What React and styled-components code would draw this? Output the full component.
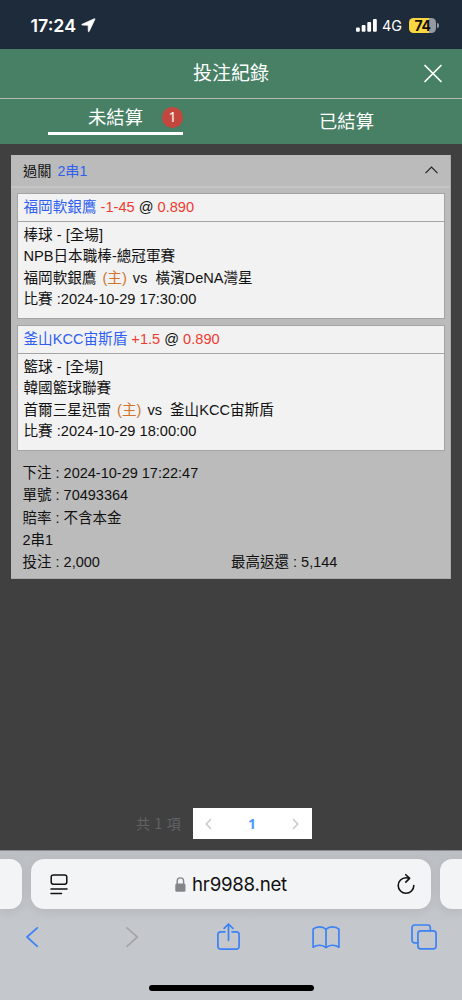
import React, { useState } from 'react'
import styled, { createGlobalStyle } from 'styled-components'

const legs = [
    {
        pick: '福岡軟銀鷹',
        line: '-1-45',
        odds: '0.890',
        sport: '棒球 - [全場]',
        league: 'NPB日本職棒-總冠軍賽',
        home: '福岡軟銀鷹',
        away: '橫濱DeNA灣星',
        time: '2024-10-29 17:30:00',
    },
    {
        pick: '釜山KCC宙斯盾',
        line: '+1.5',
        odds: '0.890',
        sport: '籃球 - [全場]',
        league: '韓國籃球聯賽',
        home: '首爾三星迅雷',
        away: '釜山KCC宙斯盾',
        time: '2024-10-29 18:00:00',
    },
]

const GlobalStyle = createGlobalStyle`
    * {
        box-sizing: border-box;
    }
    body {
        margin: 0;
        background: #404040;
        font-family: "Liberation Sans", "Noto Sans CJK TC", sans-serif;
    }
    button {
        padding: 0;
        border: 0;
        background: none;
        font: inherit;
        color: inherit;
    }
    svg {
        display: block;
        overflow: visible;
        flex: none;
    }
`

// Status bar
function StatusBar() {
    return (
        <Status>
            <Clock>
                17:24
                <svg width="15" height="15" viewBox="0 0 15 15">
                    <path d="M13.4 .7 1 6.3Q.2 6.9 1.2 7.1L7.1 7.3 7.3 13.3Q7.5 14.3 8.1 13.5L13.9 1.3Q14.1 .4 13.4 .7Z" fill="#fff" stroke="#fff" strokeWidth=".7" strokeLinejoin="round" />
                </svg>
            </Clock>
            <Signal>
                <svg width="21" height="13" viewBox="0 0 21 13" fill="#fff">
                    <rect x="0" y="8.4" width="3.8" height="4.4" rx="1" />
                    <rect x="5.7" y="6" width="3.8" height="6.8" rx="1" />
                    <rect x="11.3" y="3" width="3.8" height="9.8" rx="1" />
                    <rect x="17" y="0" width="3.8" height="12.8" rx="1" />
                </svg>
                <Network>4G</Network>
                <Battery>74</Battery>
            </Signal>
        </Status>
    )
}

function Leg({ leg }) {
    return (
        <LegBox>
            <LegHead>
                <Blue>{leg.pick}</Blue> <Red>{leg.line}</Red> @ <Red>{leg.odds}</Red>
            </LegHead>
            <LegBody>
                <div>{leg.sport}</div>
                <div>{leg.league}</div>
                <Match>
                    <span>{leg.home}</span>
                    <Orange>(主)</Orange>
                    <span>vs</span>
                    <Away>{leg.away}</Away>
                </Match>
                <div>比賽 :{leg.time}</div>
            </LegBody>
        </LegBox>
    )
}

// Safari bottom bars
function Browser() {
    return (
        <BrowserBar>
            <Tabs>
                <SideTab $left />
                <Address>
                    <svg width="18" height="21" viewBox="0 0 18 21" fill="none" stroke="#111" strokeWidth="1.5" strokeLinecap="round">
                        <rect x="1.2" y=".9" width="15.6" height="9.3" rx="2.2" />
                        <path d="M1 14.9h16M1 19.5h10.5" />
                    </svg>
                    <Host>
                        <svg width="11" height="15" viewBox="0 0 11 15">
                            <path d="M2.2 7V4.3a3.2 3.4 0 0 1 6.4 0V7" fill="none" stroke="#858589" strokeWidth="1.4" />
                            <rect x=".3" y="6.5" width="10.2" height="8.2" rx="1.5" fill="#858589" />
                        </svg>
                        hr9988.net
                    </Host>
                    <svg width="18" height="20" viewBox="0 0 18 20" fill="none" stroke="#111" strokeWidth="1.6" strokeLinecap="round" strokeLinejoin="round">
                        <path d="M12.2 4.2Q10.8 3.7 9 3.7A7.8 7.8 0 1 0 16.8 11.5" />
                        <path d="M8.8 .7 12.6 4.4 8.8 8.1" />
                    </svg>
                </Address>
                <SideTab />
            </Tabs>
            <Tools>
                <Tool>
                    <svg width="12" height="20" viewBox="0 0 12 20">
                        <path d="M11.3 .8 1 10 11.3 19.3" />
                    </svg>
                </Tool>
                <Tool $muted>
                    <svg width="12" height="20" viewBox="0 0 12 20">
                        <path d="M3 .8 13.3 10 3 19.3" />
                    </svg>
                </Tool>
                <Tool>
                    <svg width="24" height="28" viewBox="0 0 24 28">
                        <path d="M8.9 8.8H4.7A2.8 2.8 0 0 0 1.9 11.6V23.4A2.8 2.8 0 0 0 4.7 26.2H20.3A2.8 2.8 0 0 0 23.1 23.4V11.6A2.8 2.8 0 0 0 20.3 8.8H16.1" />
                        <path d="M12.5 17.3V1.2M8.1 5.3 12.5 1 16.9 5.3" />
                    </svg>
                </Tool>
                <Tool>
                    <svg width="28" height="24" viewBox="0 0 28 24">
                        <path d="M14 4.3V22.6C10.5 19.6 5 19.5 1.1 22.2V4.2C4.6 1 11 1.2 14 4.3C17 1.2 23.4 1 26.9 4.2V22.2C23 19.5 17.5 19.6 14 22.6" />
                    </svg>
                </Tool>
                <Tool>
                    <svg width="26" height="26" viewBox="0 0 26 26">
                        <path d="M6.8 18.9H3.6A2.6 2.6 0 0 1 1 16.3V3.6A2.6 2.6 0 0 1 3.6 1H16.7A2.6 2.6 0 0 1 19.3 3.6V6.9" />
                        <rect x="6.9" y="6.9" width="18.2" height="17.9" rx="2.8" />
                    </svg>
                </Tool>
            </Tools>
            <HomeBar />
        </BrowserBar>
    )
}

export default function App() {
    const [open, setOpen] = useState(true)
    const [tab, setTab] = useState('open')

    return (
        <Page>
            <GlobalStyle />
            <StatusBar />
            <Header>
                <Title>投注紀錄</Title>
                <Close aria-label="close">
                    <svg width="18" height="18" viewBox="0 0 18 18" fill="none" stroke="#fff" strokeWidth="1.7" strokeLinecap="round">
                        <path d="M1 .5 17 16.5M17 .5 1 16.5" />
                    </svg>
                </Close>
            </Header>
            <Nav>
                <NavItem onClick={() => setTab('open')}>
                    <Underline $active={tab === 'open'}>
                        <span>未結算</span>
                        <Badge>1</Badge>
                    </Underline>
                </NavItem>
                <NavItem onClick={() => setTab('settled')}>
                    <Underline $active={tab === 'settled'} $plain>已結算</Underline>
                </NavItem>
            </Nav>
            <Main>
                <Card>
                    <CardHead onClick={() => setOpen(!open)}>
                        <span>過關</span>
                        <Blue>2串1</Blue>
                        <svg width="13" height="8" viewBox="0 0 13 8" fill="none" stroke="#222" strokeWidth="1.2">
                            <path d="M.5 7.2 6.5 1 12.5 7.2" />
                        </svg>
                    </CardHead>
                    {open && (
                        <Legs>
                            {legs.map((leg) => <Leg key={leg.pick} leg={leg} />)}
                        </Legs>
                    )}
                    <Summary>
                        <div>下注 : 2024-10-29 17:22:47</div>
                        <div>單號 : 70493364</div>
                        <div>賠率 : 不含本金</div>
                        <div>2串1</div>
                        <Totals>
                            <span>投注 : 2,000</span>
                            <span>最高返還 : 5,144</span>
                        </Totals>
                    </Summary>
                </Card>
                <Pagination>
                    <Total>共 1 項</Total>
                    <Pager>
                        <svg width="7" height="12" viewBox="0 0 7 12"><path d="M6 1 1.2 6 6 11" /></svg>
                        <Current>1</Current>
                        <svg width="7" height="12" viewBox="0 0 7 12"><path d="M1 1 5.8 6 1 11" /></svg>
                    </Pager>
                </Pagination>
            </Main>
            <Browser />
        </Page>
    )
}

const Page = styled.div`
    width: 462px;
    height: 1000px;
    display: flex;
    flex-direction: column;
    overflow: hidden;
    background: #404040;
`
const Status = styled.div`
    height: 49px;
    padding: 2px 26px 0 30.5px;
    display: flex;
    align-items: center;
    justify-content: space-between;
    background: #1e2b3a;
    color: #fff;
    font-family: Inter, sans-serif;
`
const Clock = styled.div`
    display: flex;
    align-items: center;
    gap: 5px;
    font-size: 17.8px;
    font-weight: 600;
    letter-spacing: 0;
`
const Signal = styled.div`
    display: flex;
    align-items: center;
`
const Network = styled.span`
    margin-left: 5px;
    width: 27px;
    font-size: 14.4px;
`
const Battery = styled.div`
    position: relative;
    width: 27px;
    height: 15px;
    border-radius: 4.5px;
    background: linear-gradient(to right, #fbd643 20.5px, #949aa3 20.5px);
    color: #111;
    font-size: 14px;
    font-weight: 700;
    line-height: 15px;
    text-align: center;
    letter-spacing: -0.4px;

    &::after {
        content: '';
        position: absolute;
        right: -2.5px;
        top: 5px;
        width: 1.5px;
        height: 5px;
        border-radius: 0 2px 2px 0;
        background: #949aa3;
    }
`
const Header = styled.header`
    height: 50px;
    padding: 0 20px;
    display: grid;
    grid-template-columns: 18px 1fr 18px;
    align-items: center;
    background: #478065;
    border-bottom: 1px solid #b4b8b5;
`
const Title = styled.h1`
    grid-column: 2;
    margin: 0;
    font-size: 19px;
    font-weight: 400;
    color: #fff;
    text-align: center;
    line-height: 49px;
`
const Close = styled.button`
    height: 18px;
`
const Nav = styled.nav`
    height: 45px;
    display: grid;
    grid-template-columns: 1fr 1fr;
    background: #478065;
    color: #fff;
    font-size: 18.3px;
    font-weight: 400;
`
const NavItem = styled.button`
    display: flex;
    justify-content: center;
    align-items: flex-start;
`
const Underline = styled.div`
    position: relative;
    width: 135px;
    height: ${({ $plain }) => ($plain ? '45px' : '36px')};
    line-height: ${({ $plain }) => ($plain ? '45px' : '38px')};
    border-bottom: ${({ $active }) => ($active ? '3px solid #fff' : '0')};
    text-align: center;
`
const Badge = styled.span`
    position: absolute;
    right: 0;
    top: 8px;
    width: 21px;
    height: 21px;
    border-radius: 50%;
    background: #c3473d;
    font-family: "Noto Sans", sans-serif;
    font-size: 13.5px;
    font-weight: 400;
    line-height: 21px;
    text-align: center;
`
const Main = styled.main`
    flex: 1;
    padding: 11px 11px;
    display: flex;
    flex-direction: column;
    justify-content: space-between;
`
const Card = styled.section`
    height: 424px;
    background: #bbb;
    border: 1px solid #aaa;
    border-width: 0 1px 1px 0;
    color: #111;
    font-size: 14.6px;
    white-space: pre;
`
const CardHead = styled.div`
    height: 33px;
    padding: 0 12px 2px;
    display: flex;
    align-items: center;
    gap: 6px;
    border-bottom: 2px solid #c5c5c5;
    font-size: 14.2px;

    svg {
        margin-left: auto;
    }
`
const Legs = styled.div`
    padding: 5px 5px 0 6px;
    display: flex;
    flex-direction: column;
    gap: 6px;
`
const LegBox = styled.article`
    height: 126px;
    background: #f2f2f2;
    border: 1px solid #a4a4a4;
`
const LegHead = styled.div`
    height: 28px;
    padding: 0 5.5px;
    border-bottom: 1px solid #a4a4a4;
    line-height: 27px;
`
const LegBody = styled.div`
    padding: 3.2px 5.5px;
    line-height: 21.2px;
`
const Match = styled.div`
    display: flex;
`
const Blue = styled.span`
    color: #2f5ff0;
`
const Red = styled.span`
    color: #ee3b2f;
`
const Orange = styled.span`
    color: #d0742e;
    margin: 0 6px;
`
const Away = styled.span`
    margin-left: 8px;
`
const Summary = styled.div`
    padding: 11px 11.5px 0;
    line-height: 22.3px;
    font-size: 14.5px;
`
const Totals = styled.div`
    display: grid;
    grid-template-columns: 208.5px 1fr;
`
const Pagination = styled.div`
    display: flex;
    align-items: center;
    padding-left: 125px;
`
const Total = styled.span`
    width: 57px;
    color: #606266;
    font-size: 14px;
    line-height: 31px;
    letter-spacing: 0.7px;
    white-space: nowrap;
    font-family: "Noto Sans CJK TC", sans-serif;
`
const Pager = styled.div`
    width: 119px;
    height: 31px;
    padding: 0 13px 0 12px;
    display: flex;
    align-items: center;
    justify-content: space-between;
    background: #fff;

    svg {
        fill: none;
        stroke: #c0c4cc;
        stroke-width: 1.3;
    }
`
const Current = styled.b`
    color: #5297f7;
    font-size: 14px;
    font-family: "Noto Sans", sans-serif;
`
const BrowserBar = styled.footer`
    height: 150px;
    padding-top: 8px;
    display: flex;
    flex-direction: column;
    align-items: center;
    background: linear-gradient(#bcc0c5 0, #c4c7cc 80px);
    border-top: 1px solid #898b8e;
`
const Tabs = styled.div`
    width: 100%;
    height: 50px;
    display: flex;
    gap: 9px;
`
const SideTab = styled.div`
    width: 22px;
    background: #f3f4f6;
    border-radius: ${({ $left }) => ($left ? '0 12px 12px 0' : '12px 0 0 12px')};
    box-shadow: 0 2px 10px rgba(0, 0, 0, 0.08);
`
const Address = styled.div`
    flex: 1;
    padding: 0 16px 0 19px;
    display: flex;
    align-items: center;
    justify-content: space-between;
    border-radius: 13px;
    background: #f3f4f6;
    box-shadow: 0 2px 10px rgba(0, 0, 0, 0.08);
`
const Host = styled.div`
    display: flex;
    align-items: center;
    gap: 6px;
    margin-right: 3px;
    color: #111;
    font-family: Inter, sans-serif;
    font-size: 18.7px;
    letter-spacing: -0.25px;
`
const Tools = styled.div`
    width: 100%;
    height: 56px;
    padding: 0 24px 0 18px;
    display: flex;
    align-items: center;
    justify-content: space-between;
`
const Tool = styled.button`
    width: 28px;
    height: 28px;
    display: grid;
    place-items: center;

    svg {
        fill: none;
        stroke: ${({ $muted }) => ($muted ? '#a3a5a9' : '#3c82f6')};
        stroke-width: 1.7;
        stroke-linecap: round;
        stroke-linejoin: round;
    }
`
const HomeBar = styled.div`
    width: 165px;
    height: 6px;
    margin-top: 20px;
    border-radius: 3px;
    background: #000;
`
